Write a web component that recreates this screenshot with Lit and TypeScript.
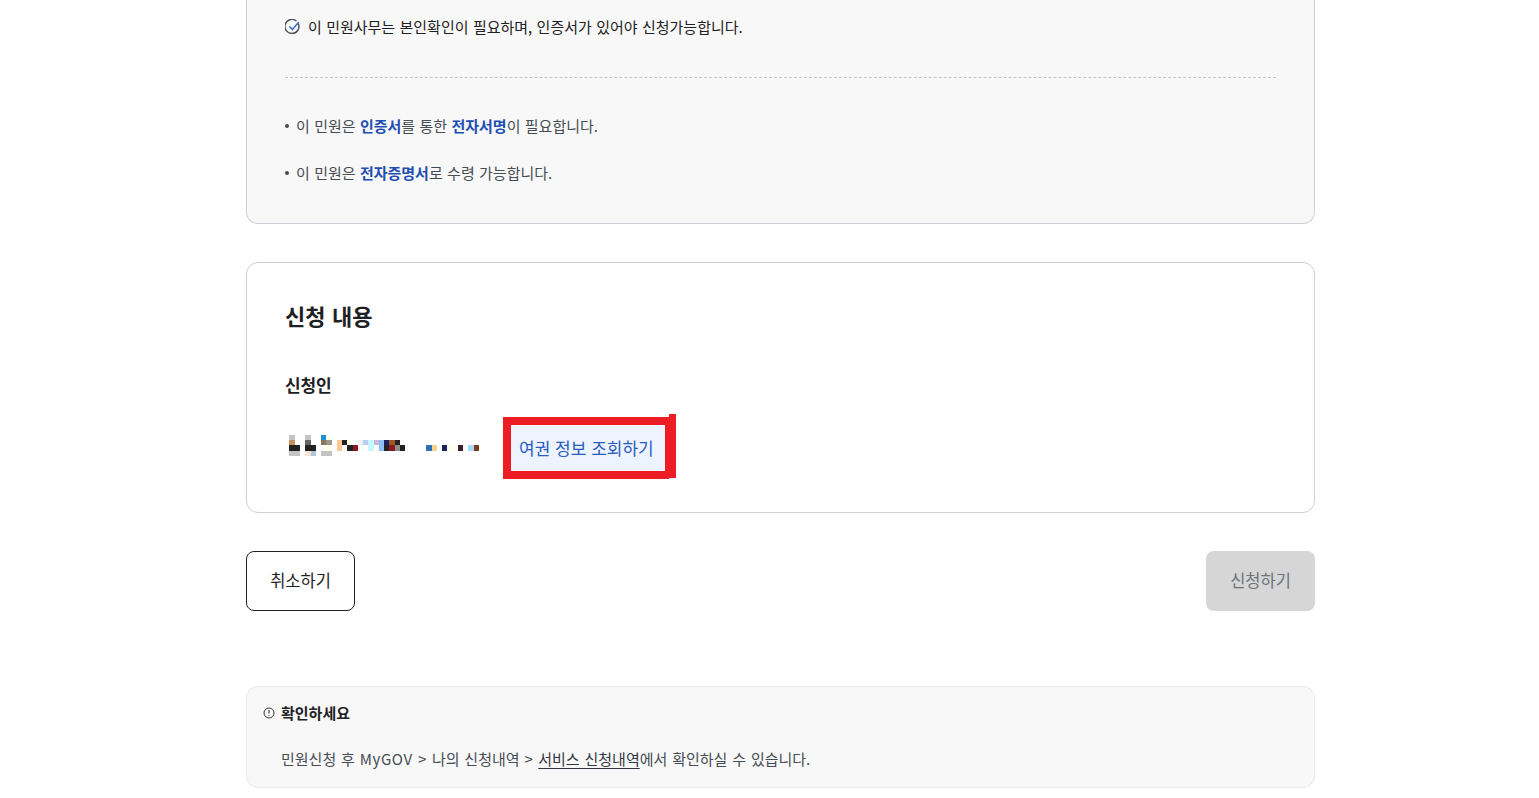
import { LitElement, html, css, svg } from "lit";
import { customElement } from "lit/decorators.js";

// [x, y, w, h, colour] in the 3x coordinates of the mosaic
const Y = [90, 105, 120, 138, 153];
const cell = (x: number, w: number, r: number, c: string) => [x, Y[r], w, Y[r + 1] - Y[r], c] as const;
const blocks = [
  cell(57, 18, 0, "#c4c4c4"), cell(57, 18, 1, "#c49060"), cell(57, 33, 2, "#222222"), cell(57, 33, 3, "#c4c4c4"),
  cell(105, 18, 0, "#c4c4c4"), cell(105, 18, 1, "#666666"), cell(105, 33, 2, "#222222"), cell(105, 18, 3, "#f8e4d4"), cell(123, 15, 3, "#b4c4d4"),
  cell(153, 16, 0, "#1e90d8"), cell(169, 16, 0, "#ffffe8"), cell(153, 16, 1, "#8c7858"), cell(169, 16, 1, "#989888"), cell(169, 16, 2, "#ffffe8"), cell(153, 32, 3, "#c4c4c4"),
  cell(201, 15, 1, "#fcc890"), cell(201, 15, 2, "#fcc890"), cell(216, 15, 1, "#222222"), cell(231, 18, 1, "#ffffe8"), cell(231, 18, 2, "#222222"), cell(249, 15, 2, "#8b1a1a"),
  cell(264, 15, 1, "#eeeeee"), cell(279, 15, 1, "#b8d0f0"), cell(294, 18, 1, "#c8f8ff"), cell(294, 18, 2, "#c8f8ff"), cell(312, 15, 1, "#c8b8d8"),
  cell(327, 15, 1, "#90c0f8"), cell(327, 15, 2, "#90c0f8"), cell(342, 15, 1, "#1e2060"), cell(342, 15, 2, "#222222"), cell(357, 18, 1, "#a05820"), cell(357, 18, 2, "#8b1a1a"),
  cell(375, 15, 1, "#222222"), cell(375, 15, 2, "#909090"), cell(390, 15, 2, "#222222"),
  cell(468, 18, 2, "#3070b8"), cell(486, 15, 2, "#f8d090"), cell(516, 15, 2, "#1e2060"), cell(534, 15, 2, "#ffffe8"), cell(564, 15, 2, "#3a2020"), cell(594, 18, 2, "#a8dcff"), cell(612, 15, 2, "#784018"),
];

@customElement("app-root")
export class AppRoot extends LitElement {
  static styles = css`
    :host {
      display: block;
      box-sizing: border-box;
      height: 798px;
      overflow: hidden;
      padding: 0 224px 0 246px;
      background: #fff;
      color: #1e2124;
      font-family: "Noto Sans CJK KR", "Noto Sans", sans-serif;
      font-size: 15px;
      letter-spacing: 0;
      word-spacing: 1px;
    }
    .notice {
      box-sizing: border-box;
      height: 224px;
      padding: 16px 38px 0;
      background: #f8f8f8;
      border: 1px solid #cdd1d5;
      border-top: 0;
      border-radius: 0 0 12px 12px;
    }
    .check {
      display: flex;
      align-items: center;
      gap: 7px;
      height: 22px;
      line-height: 22px;
    }
    .check svg { flex: none; }
    .dash {
      margin: 39px 0 0;
      border: 0;
      border-top: 1px dashed #c6c6c6;
    }
    .list {
      margin: 37px 0 0;
      padding: 0;
      list-style: none;
      display: flex;
      flex-direction: column;
      gap: 25px;
      color: #464c53;
    }
    .list li {
      display: flex;
      align-items: center;
      height: 22px;
      line-height: 22px;
      white-space: pre;
    }
    .list li::before {
      content: "";
      width: 4px;
      height: 4px;
      margin-right: 7px;
      border-radius: 50%;
      background: #464c53;
    }
    .list b { font-weight: 700; color: #1f4fb3; }
    .apply {
      box-sizing: border-box;
      height: 251px;
      margin-top: 38px;
      padding: 36px 38px 0;
      border: 1px solid #cdd1d5;
      border-radius: 12px;
    }
    h2 {
      margin: 0;
      height: 32px;
      line-height: 32px;
      font-size: 22px;
      font-weight: 700;
      word-spacing: 1.5px;
      color: #1e2124;
    }
    h3 {
      margin: 41px 0 0;
      height: 26px;
      line-height: 26px;
      font-size: 17px;
      font-weight: 700;
      letter-spacing: -0.2px;
    }
    .row {
      display: flex;
      align-items: center;
      margin-top: 27px;
      height: 46px;
      padding-left: 4px;
    }
    .mosaic { display: block; flex: none; margin-top: -5px; }
    .lookup {
      position: relative;
      box-sizing: border-box;
      width: 154px;
      height: 46px;
      margin-left: 32px;
      border: 0;
      padding: 0 0 2px 8px;
      background: #edf4ff;
      color: #2a5bc0;
      font: inherit;
      font-size: 17px;
      word-spacing: 1px;
      text-align: left;
    }
    .lookup::before {
      content: "";
      position: absolute;
      inset: -8px -4px -8px -8px;
      border: solid #ee1c25;
      border-width: 8px 4px 8px 8px;
      pointer-events: none;
    }
    .lookup::after {
      content: "";
      position: absolute;
      left: 158px;
      top: -11px;
      width: 7px;
      height: 64px;
      background: #ee1c25;
    }
    .actions {
      display: flex;
      justify-content: space-between;
      margin-top: 38px;
    }
    .btn {
      box-sizing: border-box;
      width: 109px;
      height: 60px;
      padding: 0 0 2px;
      border-radius: 8px;
      font: inherit;
      font-size: 16.5px;
    }
    .cancel { background: #fff; border: 1px solid #1e2124; color: #1e2124; }
    .submit { background: #d6d6d6; border: 0; color: #6d7278; }
    .info {
      box-sizing: border-box;
      height: 102px;
      margin-top: 75px;
      padding: 15px 16px 0;
      background: #f8f8f8;
      border: 1px solid #e6e8ea;
      border-radius: 12px;
    }
    .info-head {
      display: flex;
      align-items: center;
      gap: 6px;
      height: 22px;
      line-height: 22px;
      font-size: 15px;
      font-weight: 700;
      color: #1e2124;
    }
    .info-head svg { margin-top: 0; }
    .info p {
      margin: 24px 0 0 18px;
      height: 22px;
      line-height: 22px;
      word-spacing: 1.5px;
      color: #464c53;
    }
    .info u { text-underline-offset: 3px; color: #33363d; }
    .latin { letter-spacing: 0.6px; }
  `;

  render() {
    return html`
      <section class="notice">
        <div class="check">
          <svg width="16" height="16" viewBox="0 0 16 16" fill="none">
            <path d="M13.6 5.2A7 7 0 1 1 11 1.7" stroke="#4a5057" stroke-width="1.4" stroke-linecap="round"/>
            <path d="M4.8 7.8l2.6 2.8 6-7" stroke="#3f68c4" stroke-width="1.5" stroke-linecap="round" stroke-linejoin="round"/>
          </svg>
          <span>이 민원사무는 본인확인이 필요하며, 인증서가 있어야 신청가능합니다.</span>
        </div>
        <hr class="dash" />
        <ul class="list">
          <li>이 민원은 <b>인증서</b>를 통한 <b>전자서명</b>이 필요합니다.</li>
          <li>이 민원은 <b>전자증명서</b>로 수령 가능합니다.</li>
        </ul>
      </section>

      <section class="apply">
        <h2>신청 내용</h2>
        <h3>신청인</h3>
        <div class="row">
          <svg class="mosaic" width="190" height="21" viewBox="57 90 570 63" shape-rendering="crispEdges" aria-hidden="true">
            ${blocks.map(([x, y, w, h, c]) => svg`<rect x=${x} y=${y} width=${w} height=${h} fill=${c}></rect>`)}
          </svg>
          <button class="lookup">여권 정보 조회하기</button>
        </div>
      </section>

      <div class="actions">
        <button class="btn cancel">취소하기</button>
        <button class="btn submit">신청하기</button>
      </div>

      <section class="info">
        <div class="info-head">
          <svg width="12" height="12" viewBox="0 0 12 12" fill="none">
            <circle cx="6" cy="6" r="5" stroke="#33363d" stroke-width="1"/>
            <path d="M6 3v3.6M6 8.2v.9" stroke="#33363d" stroke-width="1.1"/>
          </svg>
          <span>확인하세요</span>
        </div>
        <p>민원신청 후 <span class="latin">MyGOV &gt;</span> 나의 신청내역 <span class="latin">&gt;</span> <u>서비스 신청내역</u>에서 확인하실 수 있습니다.</p>
      </section>
    `;
  }
}
